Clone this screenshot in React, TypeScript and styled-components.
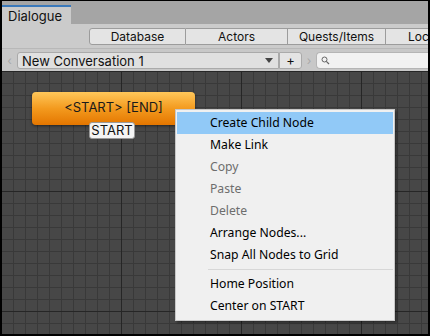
import React from 'react';
import styled, { createGlobalStyle } from 'styled-components';

const GlobalStyle = createGlobalStyle`
  html, body { margin: 0; padding: 0; background: #fff; }
  body { font-family: Inter, "Liberation Sans", sans-serif; }
`;

const Frame = styled.div`
  width: 430px;
  height: 336px;
  box-sizing: border-box;
  border: 1px solid #000;
  border-left-width: 2px;
  border-right-width: 2px;
  border-bottom-width: 2px;
  display: flex;
  flex-direction: column;
  overflow: hidden;
  position: relative;
`;

const TabBar = styled.div`
  height: 23px;
  background: #a5a5a5;
  display: flex;
  align-items: flex-end;
`;

const Tab = styled.div`
  width: 69px;
  height: 19px;
  background: #cbcbcb;
  border-top: 2px solid #3a79bb;
  font-size: 13px;
  color: #111;
  padding-left: 6px;
  box-sizing: border-box;
  line-height: 18px;
`;

const Toolbar = styled.div`
  height: 24px;
  background: #cbcbcb;
  display: flex;
  align-items: center;
  padding-left: 87px;
  border-bottom: 1px solid #b8b8b8;
  overflow: hidden;
`;

const ToolButton = styled.div<{ $w: number; $first?: boolean; $cut?: boolean }>`
  width: ${p => p.$w}px;
  flex: none;
  height: 17px;
  box-sizing: border-box;
  background: #e4e4e4;
  border: 1px solid #9c9c9c;
  border-left-width: ${p => (p.$first ? 1 : 0)}px;
  border-radius: ${p => (p.$first ? '3px 0 0 3px' : '0')};
  font-size: 12px;
  color: #111;
  text-align: ${p => (p.$cut ? 'left' : 'center')};
  padding-left: ${p => (p.$cut ? 22 : 0)}px;
  line-height: 15px;
  white-space: nowrap;
  overflow: hidden;
`;

const ConvBar = styled.div`
  height: 22px;
  background: #c8c8c8;
  display: flex;
  align-items: flex-end;
  padding-bottom: 2px;
  box-sizing: border-box;
`;

const Arrow = styled.span<{ $w: number }>`
  width: ${p => p.$w}px;
  flex: none;
  color: #a9a9a9;
  font-size: 12px;
  line-height: 17px;
  text-align: center;
`;

const Dropdown = styled.div`
  width: 262px;
  height: 17px;
  box-sizing: border-box;
  background: #e0e0e0;
  border: 1px solid #aaa;
  border-radius: 3px 0 0 3px;
  display: flex;
  align-items: center;
  justify-content: space-between;
  padding: 0 5px 0 4px;
  font-size: 13px;
  color: #111;
`;

const Caret = styled.span`
  width: 0;
  height: 0;
  border-left: 4px solid transparent;
  border-right: 4px solid transparent;
  border-top: 5px solid #444;
`;

const PlusButton = styled.div`
  width: 23px;
  height: 17px;
  box-sizing: border-box;
  background: #e4e4e4;
  border: 1px solid #aaa;
  border-radius: 0 3px 3px 0;
  font-size: 13px;
  line-height: 14px;
  text-align: center;
  color: #111;
`;

const Search = styled.div`
  flex: 1;
  height: 17px;
  box-sizing: border-box;
  background: #f2f2f2;
  border: 1px solid #b5b5b5;
  border-right: none;
  border-radius: 4px 0 0 4px;
  display: flex;
  align-items: center;
  padding-left: 4px;
`;

const Canvas = styled.div`
  flex: 1;
  position: relative;
  background-color: #474747;
  background-image:
    linear-gradient(to right, #262626 1px, transparent 1px),
    linear-gradient(to bottom, #262626 1px, transparent 1px),
    linear-gradient(to right, #393939 1px, transparent 1px),
    linear-gradient(to bottom, #393939 1px, transparent 1px);
  background-size: 120px 120px, 120px 120px, 12px 12px, 12px 12px;
  background-position: -1px 0, 0 0, -1px 0, 0 0;
`;

const Node = styled.div`
  position: absolute;
  left: 30px;
  top: 21px;
  width: 163px;
  height: 33px;
  border-radius: 4px;
  background: linear-gradient(to bottom, #ffc75a 0%, #f39a1e 50%, #e47600 100%);
  box-shadow: 0 1px 3px rgba(0, 0, 0, 0.5);
  font-size: 13px;
  color: #1a1a1a;
  text-align: center;
  line-height: 31px;
`;

const NodeLabel = styled.div`
  position: absolute;
  left: 87px;
  top: 51px;
  width: 46px;
  height: 17px;
  box-sizing: border-box;
  background: #f4f4f4;
  border: 1px solid #999;
  border-radius: 3px;
  font-size: 13px;
  line-height: 15px;
  text-align: center;
  color: #111;
`;

const Menu = styled.div`
  position: absolute;
  left: 173px;
  top: 38px;
  width: 220px;
  box-sizing: border-box;
  background: #f0f0f0;
  border: 1px solid #c8c8c8;
  box-shadow: 2px 2px 2px rgba(0, 0, 0, 0.35);
  padding: 2px 1px 3px;
  font-family: "Noto Sans", "Open Sans", sans-serif;
`;

const MenuItem = styled.div<{ $active?: boolean; $disabled?: boolean }>`
  height: 22px;
  line-height: 22px;
  padding-left: 33px;
  font-size: 12.2px;
  background: ${p => (p.$active ? '#91c9f7' : 'transparent')};
  color: ${p => (p.$disabled ? '#6d6d6d' : '#000')};
`;

const MenuSeparator = styled.div`
  height: 1px;
  background: #d7d7d7;
  margin: 3px 0 3px 31px;
`;

const menuItems: Array<{ label: string; active?: boolean; disabled?: boolean; sep?: boolean }> = [
  { label: 'Create Child Node', active: true },
  { label: 'Make Link' },
  { label: 'Copy', disabled: true },
  { label: 'Paste', disabled: true },
  { label: 'Delete', disabled: true },
  { label: 'Arrange Nodes...' },
  { label: 'Snap All Nodes to Grid', sep: true },
  { label: 'Home Position' },
  { label: 'Center on START' },
];

const SearchIcon = () => (
  <svg width="9" height="9" viewBox="0 0 9 9">
    <circle cx="3.5" cy="3.5" r="2.5" fill="none" stroke="#666" strokeWidth="1" />
    <line x1="5.3" y1="5.3" x2="8" y2="8" stroke="#666" strokeWidth="1.2" />
  </svg>
);

const App = () => {
  return <Frame>
    <GlobalStyle />
    <TabBar>
      <Tab>Dialogue</Tab>
    </TabBar>
    <Toolbar>
      <ToolButton $w={97} $first>Database</ToolButton>
      <ToolButton $w={102}>Actors</ToolButton>
      <ToolButton $w={98}>Quests/Items</ToolButton>
      <ToolButton $w={60} $cut>Locations</ToolButton>
    </Toolbar>
    <ConvBar>
      <Arrow $w={15}>‹</Arrow>
      <Dropdown>
        <span>New Conversation 1</span>
        <Caret />
      </Dropdown>
      <PlusButton>+</PlusButton>
      <Arrow $w={14}>›</Arrow>
      <Search><SearchIcon /></Search>
    </ConvBar>
    <Canvas>
      <Node>&lt;START&gt; [END]</Node>
      <NodeLabel>START</NodeLabel>
      <Menu>
        {menuItems.map((item, index) => (
          <React.Fragment key={index}>
            <MenuItem $active={item.active} $disabled={item.disabled}>{item.label}</MenuItem>
            {item.sep ? <MenuSeparator /> : null}
          </React.Fragment>
        ))}
      </Menu>
    </Canvas>
  </Frame>;
};

export default App;
